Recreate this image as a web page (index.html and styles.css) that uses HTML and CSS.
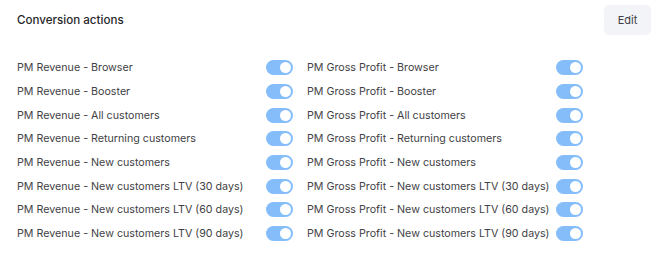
FILE: index.html
```html
<!DOCTYPE html>
<html>
<head>
<meta charset="utf-8">
<link rel="stylesheet" href="styles.css">
</head>
<body>
<div class="card">
  <div class="header">
    <h2 class="title">Conversion actions</h2>
    <button class="edit">Edit</button>
  </div>
  <div class="grid">
    <div class="item"><span>PM Revenue - Browser</span><span class="toggle"></span></div>
    <div class="item"><span>PM Gross Profit - Browser</span><span class="toggle"></span></div>
    <div class="item"><span>PM Revenue - Booster</span><span class="toggle"></span></div>
    <div class="item"><span>PM Gross Profit - Booster</span><span class="toggle"></span></div>
    <div class="item"><span>PM Revenue - All customers</span><span class="toggle"></span></div>
    <div class="item"><span>PM Gross Profit - All customers</span><span class="toggle"></span></div>
    <div class="item"><span>PM Revenue - Returning customers</span><span class="toggle"></span></div>
    <div class="item"><span>PM Gross Profit - Returning customers</span><span class="toggle"></span></div>
    <div class="item"><span>PM Revenue - New customers</span><span class="toggle"></span></div>
    <div class="item"><span>PM Gross Profit - New customers</span><span class="toggle"></span></div>
    <div class="item"><span>PM Revenue - New customers LTV (30 days)</span><span class="toggle"></span></div>
    <div class="item"><span>PM Gross Profit - New customers LTV (30 days)</span><span class="toggle"></span></div>
    <div class="item"><span>PM Revenue - New customers LTV (60 days)</span><span class="toggle"></span></div>
    <div class="item"><span>PM Gross Profit - New customers LTV (60 days)</span><span class="toggle"></span></div>
    <div class="item"><span>PM Revenue - New customers LTV (90 days)</span><span class="toggle"></span></div>
    <div class="item"><span>PM Gross Profit - New customers LTV (90 days)</span><span class="toggle"></span></div>
  </div>
</div>
</body>
</html>
```
FILE: styles.css
```css
html, body {
  margin: 0;
  padding: 0;
  background: #ffffff;
}
body {
  font-family: Inter, "Noto Sans", sans-serif;
  color: #3f3f46;
}
.card {
  padding: 5px 19px 0 17px;
}
.header {
  display: flex;
  justify-content: space-between;
  align-items: center;
  height: 30px;
}
.title {
  margin: 0;
  font-size: 11.6px;
  font-weight: 500;
  color: #27272a;
}
.edit {
  font-family: inherit;
  font-size: 11px;
  color: #3f3f46;
  background: #f3f4f7;
  border: none;
  border-radius: 5px;
  width: 47px;
  height: 30px;
  padding: 0;
}
.grid {
  margin-top: 21px;
  display: grid;
  grid-template-columns: 276px 276px;
  column-gap: 14px;
}
.item {
  display: flex;
  justify-content: space-between;
  align-items: center;
  height: 23.7px;
  font-size: 10.7px;
  white-space: nowrap;
}
.toggle {
  position: relative;
  width: 27px;
  height: 15px;
  border-radius: 8px;
  background: #85bdfb;
  flex-shrink: 0;
}
.toggle::after {
  content: "";
  position: absolute;
  top: 2px;
  right: 2px;
  width: 11px;
  height: 11px;
  border-radius: 50%;
  background: #ffffff;
}
```
